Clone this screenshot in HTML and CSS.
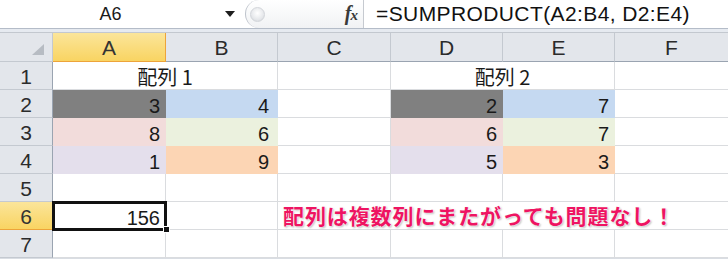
FILE: index.html
```html
<!DOCTYPE html>
<html lang="ja">
<head>
<meta charset="utf-8">
<link rel="stylesheet" href="styles.css">
</head>
<body>
<div class="app">
  <div class="fbar">
    <div class="namebox">
      <span class="name">A6</span>
      <span class="arrow"></span>
    </div>
    <div class="grip">
      <span class="knob"></span>
      <span class="fx"><i>f</i><i class="x">x</i></span>
    </div>
    <div class="formula">=SUMPRODUCT(A2:B4, D2:E4)</div>
  </div>
  <div class="sep"></div>
  <div class="sheet">
    <div class="hd corner"><svg width="14" height="12" viewBox="0 0 14 12"><polygon points="13,0 13,11 1,11" fill="#b7bcc3"/></svg></div>
    <div class="hd col sel">A</div>
    <div class="hd col">B</div>
    <div class="hd col">C</div>
    <div class="hd col">D</div>
    <div class="hd col">E</div>
    <div class="hd col last">F</div>

    <div class="hd row">1</div>
    <div class="c span2 ctr">配列 1</div>
    <div class="c"></div>
    <div class="c span2 ctr">配列 2</div>
    <div class="c last"></div>

    <div class="hd row">2</div>
    <div class="c n dark">3</div>
    <div class="c n blue b">4</div>
    <div class="c"></div>
    <div class="c n dark">2</div>
    <div class="c n blue">7</div>
    <div class="c last"></div>

    <div class="hd row">3</div>
    <div class="c n pink">8</div>
    <div class="c n green b">6</div>
    <div class="c"></div>
    <div class="c n pink">6</div>
    <div class="c n green">7</div>
    <div class="c last"></div>

    <div class="hd row">4</div>
    <div class="c n lav">1</div>
    <div class="c n peach b">9</div>
    <div class="c"></div>
    <div class="c n lav">5</div>
    <div class="c n peach">3</div>
    <div class="c last"></div>

    <div class="hd row">5</div>
    <div class="c"></div>
    <div class="c"></div>
    <div class="c"></div>
    <div class="c"></div>
    <div class="c"></div>
    <div class="c last"></div>

    <div class="hd row sel">6</div>
    <div class="c n active">156<span class="handle"></span></div>
    <div class="c"></div>
    <div class="c span4 note">配列は複数列にまたがっても問題なし！</div>

    <div class="hd row">7</div>
    <div class="c"></div>
    <div class="c"></div>
    <div class="c"></div>
    <div class="c"></div>
    <div class="c"></div>
    <div class="c last"></div>
  </div>
</div>
</body>
</html>
```

FILE: styles.css
```css
* { box-sizing: border-box; margin: 0; padding: 0; }
html, body { width: 728px; height: 259px; overflow: hidden; background: #d9dde3; }
body { font-family: "Liberation Sans", "Noto Sans CJK JP", sans-serif; color: #1a1a1a; }

.app { width: 728px; }

.fbar {
  display: flex;
  height: 29px;
  background: #ffffff;
  border-bottom: 1px solid #b4bcc8;
}
.namebox {
  width: 245px;
  position: relative;
  display: flex;
  align-items: center;
  justify-content: center;
  padding-right: 30px;
}
.name { font-size: 18px; line-height: 20px; padding-left: 6px; }
.arrow {
  position: absolute;
  left: 225px;
  top: 11px;
  width: 0; height: 0;
  border-left: 5px solid transparent;
  border-right: 5px solid transparent;
  border-top: 6px solid #1e1e1e;
}
.grip {
  width: 119px;
  display: flex;
  align-items: center;
  justify-content: space-between;
  padding-left: 4px;
  padding-right: 6px;
  border: 1px solid #bfc4cc;
  border-right: 1px solid #c6cad0;
  border-top: none;
  border-bottom: none;
  border-radius: 14px 0 0 14px;
  background: linear-gradient(#ffffff, #f1f2f4);
}
.knob {
  width: 15px; height: 15px;
  border-radius: 50%;
  background: radial-gradient(circle at 50% 40%, #ffffff 0%, #e6e8eb 60%, #cfd2d6 100%);
  border: 1px solid #d2d5da;
}
.fx {
  font-family: "Liberation Serif", serif;
  font-weight: bold;
  font-style: italic;
  font-size: 20px;
  color: #3a3a3a;
  letter-spacing: -1px;
  line-height: 20px;
}
.fx i { font-style: italic; }
.fx .x { font-size: 15px; }
.formula {
  flex: 1;
  font-size: 21px;
  line-height: 27px;
  padding-left: 12px;
  letter-spacing: 0.4px;
  color: #111;
  white-space: nowrap;
}
.sep {
  height: 4px;
  background: #e6eaf0;
  border-bottom: 1px solid #c3c8cf;
}

.sheet {
  display: grid;
  grid-template-columns: 53px 113px 112px 113px 112px 112px 113px;
  grid-template-rows: 29px repeat(7, 28px);
  background: #ffffff;
}

.hd {
  background: #e3e6eb;
  border-right: 1px solid #c4c9d0;
  border-bottom: 1px solid #c4c9d0;
  display: flex;
  align-items: center;
  justify-content: center;
  font-size: 21px;
  line-height: 20px;
  color: #2b2b2b;
  padding-top: 2px;
}
.hd.corner { justify-content: flex-end; align-items: flex-end; padding: 0 7px 5px 0; }
.hd.col.last { border-right: none; }
.hd.row { border-right: 1px solid #9aa4b1; }
.hd.col { border-bottom: 1px solid #9aa4b1; }
.hd.sel {
  background: linear-gradient(#fbe59a, #f9d462);
  border-color: #eda43a;
  color: #333;
}
.hd.row.sel { border-right-color: #eda43a; }

.c {
  border-right: 1px solid #dadcdf;
  border-bottom: 1px solid #dadcdf;
  font-size: 20px;
  line-height: 20px;
  display: flex;
  align-items: flex-end;
  padding-bottom: 1px;
  color: #1a1a1a;
  white-space: nowrap;
}
.c.last { border-right: none; }
.c.n { justify-content: flex-end; padding-right: 5px; }
.c.n.b { padding-right: 8px; }
.c.span2 { grid-column: span 2; }
.c.span4 { grid-column: span 4; border-right: none; }
.c.ctr { justify-content: center; font-family: "Noto Sans CJK JP", sans-serif; font-size: 20px; line-height: 24px; padding-bottom: 0; }

.dark { background: #808080; border-color: #808080; }
.blue { background: #c5d9f1; border-color: #c5d9f1; }
.pink { background: #f2dcdb; border-color: #f2dcdb; }
.green { background: #ebf1de; border-color: #ebf1de; }
.lav { background: #e4dfec; border-color: #e4dfec; }
.peach { background: #fcd5b4; border-color: #fcd5b4; }

.active {
  position: relative;
  outline: 3px solid #111;
  outline-offset: -2px;
  z-index: 1;
}
.handle {
  position: absolute;
  right: -5px;
  bottom: -4px;
  width: 7px;
  height: 7px;
  background: #111;
  border: 1px solid #fff;
}

.note {
  font-family: "Noto Sans CJK JP", sans-serif;
  font-weight: bold;
  font-size: 21px;
  letter-spacing: 0.9px;
  line-height: 26px;
  color: #ee1462;
  padding-left: 5px;
  align-items: center;
  padding-bottom: 2px;
  text-shadow: 0 0 2px #fff, 0 0 2px #fff, 1px 1px 2px rgba(0,0,0,0.35);
}
```
